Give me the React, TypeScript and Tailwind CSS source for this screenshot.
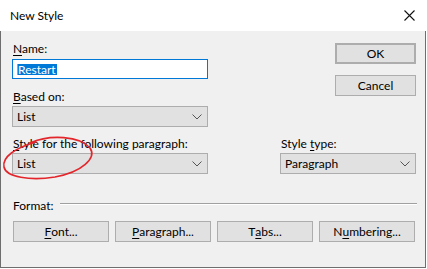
import React from "react";

const font = { fontFamily: 'Lato, "Noto Sans", "Liberation Sans", sans-serif' };

function Chevron() {
  return (
    <svg width="10" height="6" viewBox="0 0 10 6" className="shrink-0">
      <path d="M0.5 0.5 L5 5 L9.5 0.5" fill="none" stroke="#555" strokeWidth="1" />
    </svg>
  );
}

function Select({ value, className }: { value: string; className: string }) {
  return (
    <div
      className={`h-[21px] border border-[#adadad] bg-[#e1e1e1] flex items-center pl-[4px] pr-[5px] justify-between ${className}`}
    >
      <span className="leading-[15px]">{value}</span>
      <Chevron />
    </div>
  );
}

function Btn({ children, className = "" }: { children: React.ReactNode; className?: string }) {
  return (
    <div
      className={`h-[21px] border border-[#adadad] bg-[#e1e1e1] flex items-center justify-center leading-[15px] ${className}`}
    >
      {children}
    </div>
  );
}

function U({ children }: { children: React.ReactNode }) {
  return <span className="underline underline-offset-[2px] decoration-1">{children}</span>;
}

export default function App() {
  return (
    <div className="w-[427px] h-[269px] bg-white relative text-[12px] text-black" style={font}>
      <div className="w-[426px] h-[268px] flex flex-col">
        <div className="h-[31px] bg-white flex items-center justify-between pl-[10px] pr-[11px] shrink-0">
          <span className="text-[12px] leading-[15px]">New Style</span>
          <svg width="11" height="11" viewBox="0 0 11 11">
            <path d="M0.5 0.5 L10.5 10.5 M10.5 0.5 L0.5 10.5" stroke="#111" strokeWidth="1.1" />
          </svg>
        </div>
        <div className="flex-1 bg-[#f0f0f0] border-l border-r border-b border-[#6e6e6e] pl-[11px] pr-[9px] pt-[10px] flex flex-col">
          <div className="flex">
            <div className="w-[196px] flex flex-col">
              <div className="leading-[15px] pl-[1px]">
                <U>N</U>ame:
              </div>
              <div className="mt-[3px] h-[20px] border border-[#0078d7] bg-white flex items-center pl-[4px]">
                <span className="w-[1px] h-[11px] bg-[#f7901e]" />
                <span className="bg-[#0078d7] text-white h-[11px] leading-[11px] pr-[1px]">Restart</span>
              </div>
              <div className="mt-[10px] leading-[15px] pl-[1px]">
                <U>B</U>ased on:
              </div>
              <Select value="List" className="mt-[2px] w-[196px]" />
            </div>
            <div className="ml-auto w-[81px] flex flex-col mt-[2px]">
              <Btn className="h-[20px] border-2 border-[#0078d7]">OK</Btn>
              <Btn className="h-[20px] mt-[11px]">Cancel</Btn>
            </div>
          </div>
          <div className="flex mt-[9px]">
            <div className="w-[196px] flex flex-col">
              <div className="leading-[15px] pl-[1px]">
                <U>S</U>tyle for the following paragraph:
              </div>
              <Select value="List" className="mt-[2px] w-[196px]" />
            </div>
            <div className="ml-[72px] w-[136px] flex flex-col">
              <div className="leading-[15px] pl-[1px]">
                Style <U>t</U>ype:
              </div>
              <Select value="Paragraph" className="mt-[2px] w-[136px]" />
            </div>
          </div>
          <div className="flex items-start mt-[24px] pl-[1px]">
            <span className="leading-[15px]">Format:</span>
            <div className="ml-[6px] mt-[5px] flex-1 mr-[-1px] h-[2px] border-t border-[#a0a0a0] border-b border-b-white" />
          </div>
          <div className="flex gap-[6px] mt-[8px] pl-[1px]">
            <Btn className="w-[96px]">
              <U>F</U>ont...
            </Btn>
            <Btn className="w-[96px]">
              <U>P</U>aragraph...
            </Btn>
            <Btn className="w-[96px]">
              T<U>a</U>bs...
            </Btn>
            <Btn className="w-[96px]">
              N<U>u</U>mbering...
            </Btn>
          </div>
        </div>
      </div>
      <svg className="absolute left-0 top-[130px] pointer-events-none" width="110" height="60" viewBox="0 130 110 60">
        <path
          d="M30 143 C 50 134, 80 136, 90 148 C 97 158, 82 172, 55 177 C 30 181, 6 177, 4 167 C 2 157, 15 148, 36 142"
          fill="none"
          stroke="#e3262b"
          strokeWidth="1.6"
          strokeLinecap="round"
        />
      </svg>
    </div>
  );
}
